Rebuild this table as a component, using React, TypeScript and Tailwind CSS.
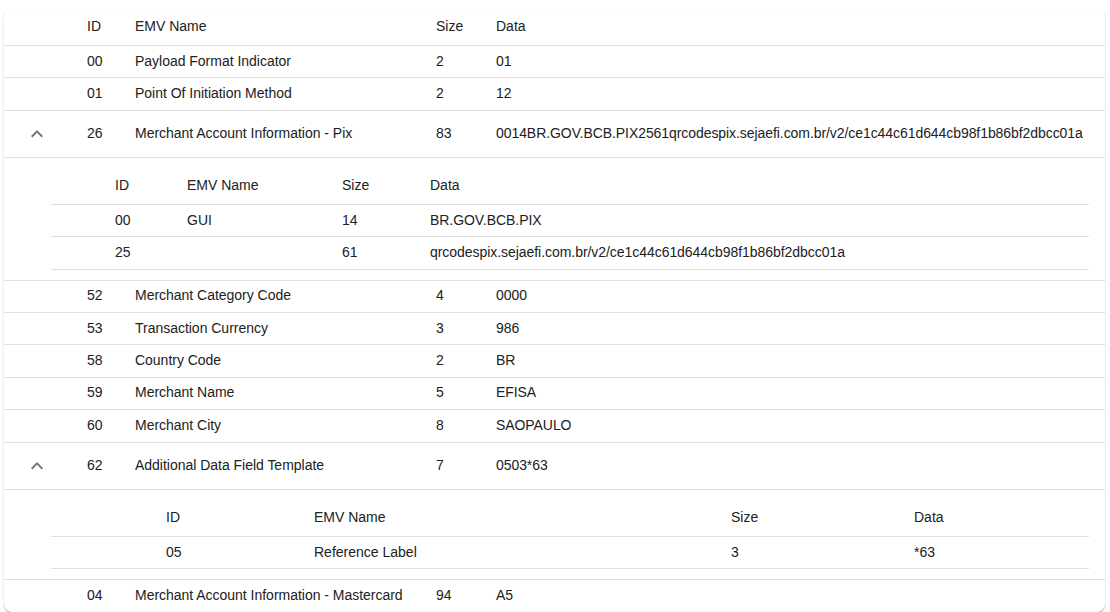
type Field = { id: string; name: string; size: string; data: string; children?: Field[] };

const fields: Field[] = [
  { id: '00', name: 'Payload Format Indicator', size: '2', data: '01' },
  { id: '01', name: 'Point Of Initiation Method', size: '2', data: '12' },
  {
    id: '26',
    name: 'Merchant Account Information - Pix',
    size: '83',
    data: '0014BR.GOV.BCB.PIX2561qrcodespix.sejaefi.com.br/v2/ce1c44c61d644cb98f1b86bf2dbcc01a',
    children: [
      { id: '00', name: 'GUI', size: '14', data: 'BR.GOV.BCB.PIX' },
      { id: '25', name: '', size: '61', data: 'qrcodespix.sejaefi.com.br/v2/ce1c44c61d644cb98f1b86bf2dbcc01a' },
    ],
  },
  { id: '52', name: 'Merchant Category Code', size: '4', data: '0000' },
  { id: '53', name: 'Transaction Currency', size: '3', data: '986' },
  { id: '58', name: 'Country Code', size: '2', data: 'BR' },
  { id: '59', name: 'Merchant Name', size: '5', data: 'EFISA' },
  { id: '60', name: 'Merchant City', size: '8', data: 'SAOPAULO' },
  {
    id: '62',
    name: 'Additional Data Field Template',
    size: '7',
    data: '0503*63',
    children: [{ id: '05', name: 'Reference Label', size: '3', data: '*63' }],
  },
  { id: '04', name: 'Merchant Account Information - Mastercard', size: '94', data: 'A5' },
];

const outerCols = 'grid grid-cols-[67px_48px_301px_60px_1fr]';

function ChevronUp() {
  return (
    <span className="mt-[2px] flex h-[34px] w-[34px] items-center justify-center">
      <svg viewBox="0 0 24 24" width="24" height="24" fill="#757575">
        <path d="M7.41 15.41 12 10.83l4.59 4.58L18 14l-6-6-6 6z" />
      </svg>
    </span>
  );
}

function SubTable({ rows, cols }: { rows: Field[]; cols: string }) {
  return (
    <div className="mb-[10px] ml-[47px] mr-[16px] mt-[10px]">
      <div className={`${cols} h-[37px] items-center border-b border-[#e0e0e0] pb-[2px]`}>
        <div />
        <div className="px-4">ID</div>
        <div className="px-4">EMV Name</div>
        <div className="px-4">Size</div>
        <div className="px-4">Data</div>
      </div>
      {rows.map((r) => (
        <div key={r.id} className={`${cols} h-[32.4px] items-center border-b border-[#e0e0e0] pb-[1px]`}>
          <div />
          <div className="px-4">{r.id}</div>
          <div className="px-4">{r.name}</div>
          <div className="px-4">{r.size}</div>
          <div className="whitespace-nowrap px-4 tracking-[-0.05px]">{r.data}</div>
        </div>
      ))}
    </div>
  );
}

export default function App() {
  return (
    <div className="min-h-[612px] bg-white pl-[4px] pr-[5px] pt-[9px] font-['Liberation_Sans',Arial,sans-serif] text-[14px] leading-[20px] text-[#212121]">
      <div className="h-[603px] overflow-hidden rounded-lg bg-white shadow-[0_2px_1px_-1px_rgba(0,0,0,0.2),0_1px_1px_0_rgba(0,0,0,0.14),0_1px_3px_0_rgba(0,0,0,0.12)]">
        <div className={`${outerCols} h-[37px] items-center border-b border-[#e0e0e0] pb-[2px]`}>
          <div />
          <div className="px-4">ID</div>
          <div className="px-4">EMV Name</div>
          <div className="px-4">Size</div>
          <div className="px-4">Data</div>
        </div>
        {fields.map((f, i) => (
          <div key={f.id + i}>
            <div
              className={`${outerCols} items-center border-[#e0e0e0] pb-[2px] ${f.children ? 'h-[47px]' : 'h-[32.4px]'} ${
                i === fields.length - 1 ? '' : 'border-b'
              }`}
            >
              <div className="pl-4">{f.children && <ChevronUp />}</div>
              <div className="px-4">{f.id}</div>
              <div className="whitespace-nowrap px-4 tracking-[-0.02px]">{f.name}</div>
              <div className="px-4">{f.size}</div>
              <div className="whitespace-nowrap px-4 tracking-[-0.07px]">{f.data}</div>
            </div>
            {f.children && (
              <div className="border-b border-[#e0e0e0]">
                <SubTable
                  rows={f.children}
                  cols={
                    f.id === '26'
                      ? 'grid grid-cols-[48px_72px_155px_88px_1fr]'
                      : 'grid grid-cols-[99px_148px_417px_183px_1fr]'
                  }
                />
              </div>
            )}
          </div>
        ))}
      </div>
    </div>
  );
}
